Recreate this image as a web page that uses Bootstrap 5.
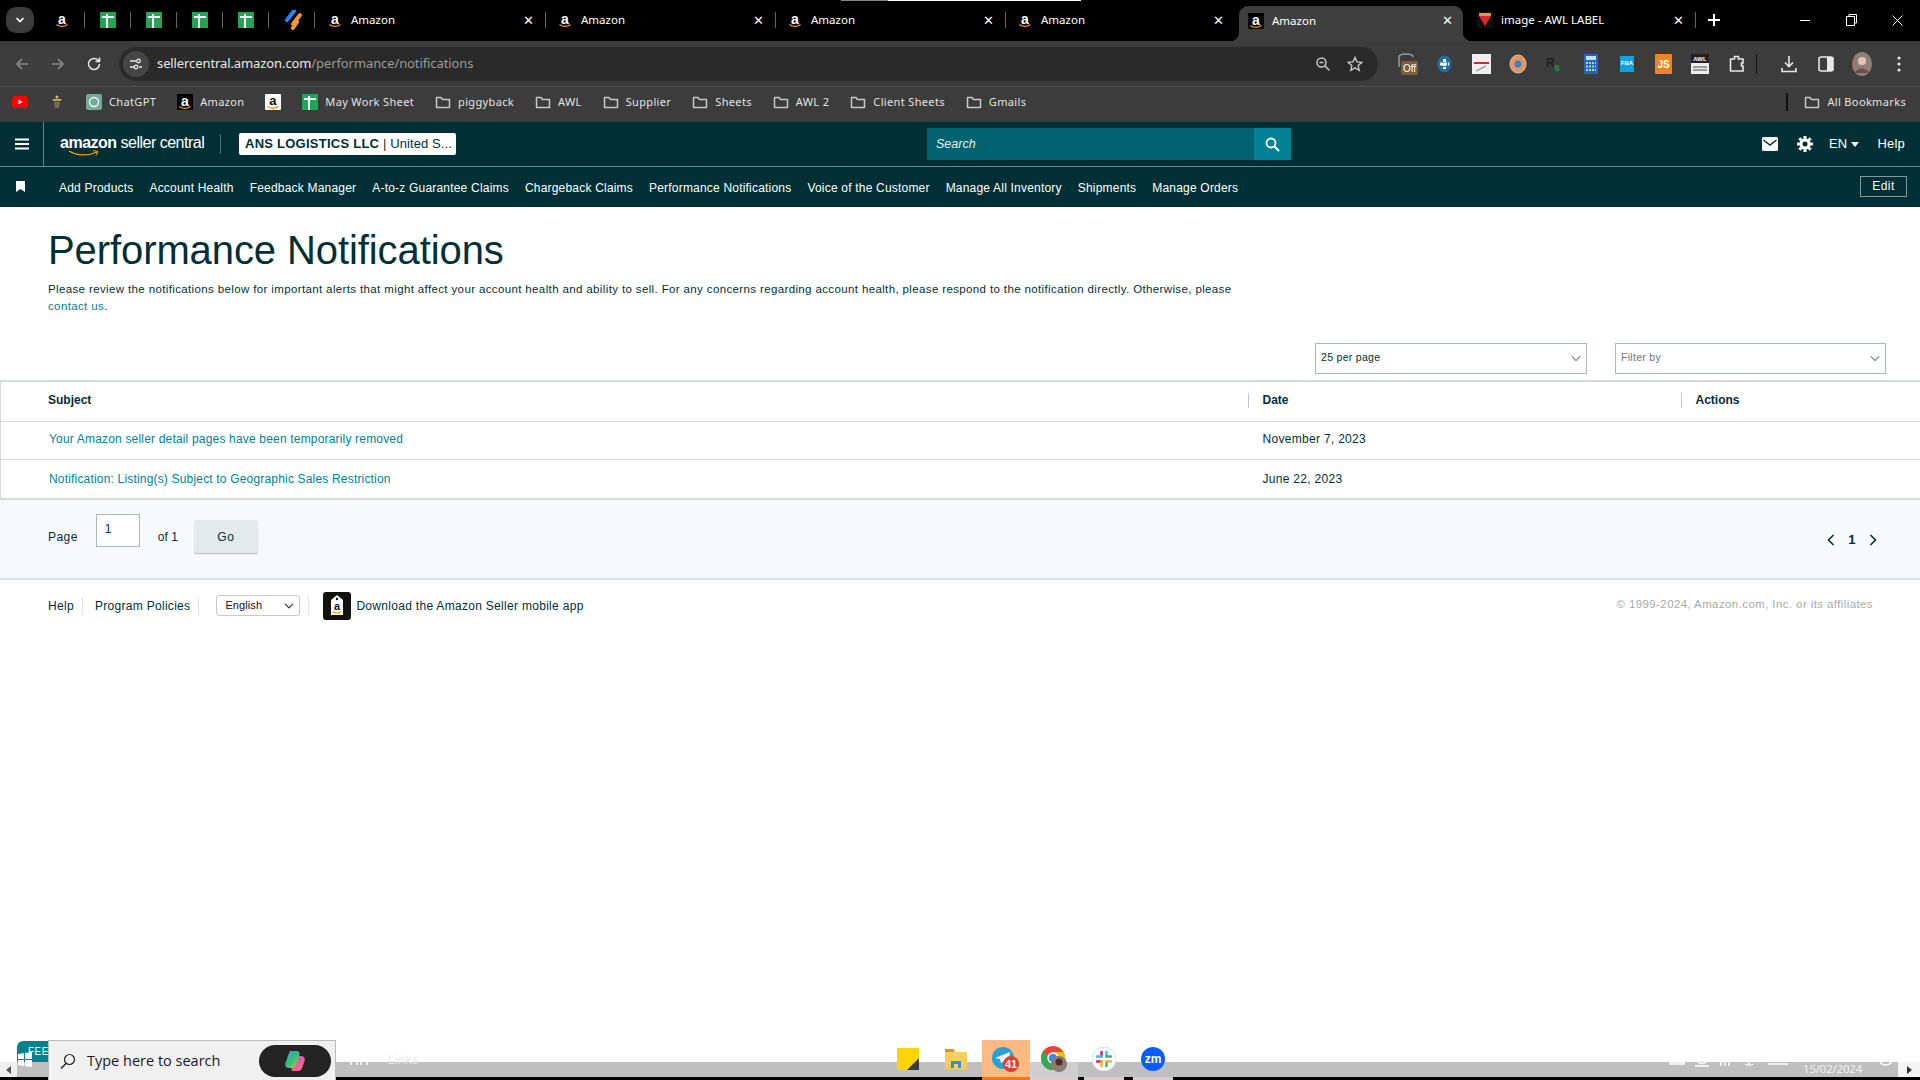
<!DOCTYPE html>
<html lang="en">
<head>
    <meta charset="UTF-8">
    <meta name="viewport" content="width=device-width, initial-scale=1">
    <title>Performance Notifications</title>
    <link href="https://cdn.jsdelivr.net/npm/bootstrap@5.3.0/dist/css/bootstrap.min.css" rel="stylesheet">
    <style>
        html, body { height: 100%; }
        body {
            font-family: "Liberation Sans", Arial, sans-serif;
            font-size: 12px;
            letter-spacing: .45px;
            color: #002f36;
            background: #fff;
            overflow: hidden;
        }
        a { color: #008296; text-decoration: none; }
        .shell { height: 1080px; }

        /* browser chrome */
        .tabstrip { height: 41px; background: #000; color: #fff; font-family: "Noto Sans", sans-serif; letter-spacing: 0; }
        .sliver { height: 1px; width: 240px; margin-left: 841px; background: linear-gradient(90deg, #888 47px, #fff 47px); }
        .tabrow { height: 40px; }
        .tablist-btn { width: 28px; height: 26px; margin: 0 5px 2px 6px; border-radius: 10px; background: #3c3c3c; }
        .pin { width: 46px; height: 38px; position: relative; margin-bottom: 2px; }
        .pin::after, .tabx::after { content: ""; position: absolute; right: 0; top: 11px; height: 16px; border-right: 1px solid #666; }
        .pin.jira { padding-left: 3px; }
        .tabx { width: 230px; height: 38px; margin-bottom: 2px; padding: 0 12px 0 11px; position: relative; font-size: 11.5px; }
        .tabx.first { margin-left: 1px; }
        .tabx .ttl { margin-left: 8px; }
        .tabx.no-sep::after { display: none; }
        .tabx.on { width: 224px; height: 35px; margin: 5px 3px 0 3px; padding: 0 10px 6px 9px; background: #3f3f3f; border-radius: 9px 9px 0 0; }
        .tabx.on::after { content: ""; top: auto; bottom: 0; right: -9px; width: 9px; height: 9px; border: 0; background: radial-gradient(circle at 100% 0, #000 9px, #3f3f3f 9.5px); }
        .tabx.on::before { content: ""; position: absolute; bottom: 0; left: -9px; width: 9px; height: 9px; background: radial-gradient(circle at 0 0, #000 9px, #3f3f3f 9.5px); }
        .tab-close { margin-left: auto; font-size: 13px; line-height: 1; }
        .newtab { margin: 0 0 2px 11px; }
        .wincontrols { margin-left: auto; margin-bottom: 2px; }
        .winbtn { width: 46px; height: 38px; }

        .toolbar { height: 46px; background: #3c3c3c; border-bottom: 1px solid #515151; }
        .navbtn { width: 36px; }
        .omni { width: 1259px; height: 34px; margin-left: 7px; background: #2a2a2a; border-radius: 17px; color: #e8e8e8; font-family: "Noto Sans", sans-serif; font-size: 13px; letter-spacing: -.1px; padding: 0 15px 0 4px; }
        .omni .tune { width: 26px; height: 26px; border-radius: 50%; background: #454545; margin-right: 8px; }
        .omni .path { color: #9a9a9a; }
        .exts { margin-left: 12px; }
        .ext { width: 36.5px; }
        .bar-sep { width: 1px; height: 20px; background: #111; margin: 0 14px 0 1px; }

        .bookmarks { height: 35px; padding: 0 0 5px 12px; background: #3c3c3c; color: #e4e4e4; font-family: "Noto Sans", sans-serif; font-size: 11px; letter-spacing: .35px; gap: 21px; }
        .bm { gap: 7px; white-space: nowrap; }
        .bm.trailing { margin-left: auto; margin-right: 14px; }
        .bm-sep { width: 2px; height: 18px; background: #111; margin-right: 9px; }

        /* seller header */
        .seller-top { height: 45px; background: #002f36; color: #fff; border-bottom: 1px solid #6f8488; }
        .burger { width: 44px; height: 44px; border-right: 1px solid #6f8488; }
        .sc-logo { margin-left: 16px; width: 161px; height: 44px; position: relative; line-height: 1; }
        .sc-logo::after { content: ""; position: absolute; right: 0; top: 12px; height: 20px; border-right: 1px solid #56707a; }
        .logo-line { font-size: 16px; letter-spacing: -.5px; margin-top: -3px; white-space: nowrap; }
        .logo-smile { position: absolute; left: 8px; top: 28px; }
        .acct { margin-left: 18px; width: 217px; height: 22px; padding-left: 6px; background: #fff; color: #002f36; border-radius: 2px; font-size: 13px; letter-spacing: .1px; white-space: nowrap; }
        .acct b { font-size: 13px; letter-spacing: .25px; }
        .searchwrap { width: 364px; height: 32px; margin-left: 471px; }
        .searchfield { flex: 1; border: 0; border-radius: 0; background: #006170; color: #fff; font-size: 12.5px; font-style: italic; padding: 0 9px; }
        .searchfield::placeholder { color: #e6f0f2; opacity: 1; }
        .searchfield:focus { background: #006170; box-shadow: none; }
        .searchbtn { width: 37px; height: 32px; background: #008296; border: 0; border-radius: 0; padding: 0; }
        .top-right { margin-left: auto; padding-right: 15px; gap: 18px; font-size: 13px; letter-spacing: .2px; }
        .top-right .gear { margin: 0 -2px 0 1px; }
        .seller-nav { height: 40px; background: #002f36; color: #fff; padding-left: 16px; padding-right: 13px; }
        .seller-nav .marker { width: 43px; margin-top: -1px; }
        .seller-nav .links { gap: 16px; letter-spacing: .2px; white-space: nowrap; margin-top: 1px; }
        .seller-nav a { color: #fff; }
        .edit-btn { margin-left: auto; margin-top: -2px; width: 47px; height: 21px; padding: 0; border: 1px solid #87989b; border-radius: 0; background: transparent; color: #fff; font-size: 12px; letter-spacing: .5px; line-height: 17px; }

        /* page */
        .page-head { padding: 20px 48px 0 48px; height: 136px; }
        .page-head h1 { font-size: 40px; font-weight: 400; margin: 0; line-height: 46px; letter-spacing: -.09px; color: #002f36; }
        .page-head p { margin: 8px 0 0; width: 1195px; line-height: 17px; font-size: 11.5px; letter-spacing: .37px; }
        .filters { height: 31px; padding-right: 34px; gap: 28px; justify-content: flex-end; margin-bottom: 6px; }
        .pick { height: 31px; border: 1px solid #a9b7b7; border-radius: 0; font-size: 10.5px; letter-spacing: .3px; padding: 0 20px 2px 5px; color: #002f36; background-image: url("data:image/svg+xml,%3csvg xmlns='http://www.w3.org/2000/svg' viewBox='0 0 12 8'%3e%3cpath fill='none' stroke='%23667a7c' stroke-width='1.300' d='M1 1.500l5 5 5-5'/%3e%3c/svg%3e"); background-size: 10px 7px; background-position: right 5px center; }
        .pick.per { width: 272px; }
        .pick.flt { width: 271px; color: #6c7778; }
        .notif-table { table-layout: fixed; width: 100%; margin: 0; border-top: 2px solid #d5dbdb; border-left: 1px solid #d5dbdb; --bs-table-color: #002f36; font-size: 12px; letter-spacing: .18px; }
        .notif-table th, .notif-table td { padding: 0; vertical-align: middle; border-bottom: 1px solid #d5dbdb; }
        .notif-table th { letter-spacing: 0; padding-bottom: 2px; }
        .notif-table thead tr { height: 40px; }
        .notif-table tbody tr { height: 38px; }
        .notif-table tbody tr:first-child td { padding-bottom: 2px; }
        .notif-table tbody tr:last-child { height: 40px; }
        .notif-table tbody tr:last-child td { border-bottom: 2px solid #d5dbdb; padding-top: 1px; }
        .notif-table .c1 { width: 1247px; padding-left: 48px; }
        .notif-table th.c1 { padding-left: 47px; }
        .notif-table .c2 { width: 433px; }
        .notif-table .head-cell { border-left: 1px solid #c0c8c8; padding-left: 14px; height: 15px; line-height: 15px; }
        .notif-table .date-cell { padding-left: 15px; letter-spacing: .3px; }
        .notif-table .c3 { width: 240px; }
        .pager-bar { height: 80px; background: #f8f9fb; border-bottom: 2px solid #dfe3e6; padding: 14px 43px 0 48px; }
        .pager-bar .pg-label { margin-top: 14px; }
        .pager-bar .pg-of { letter-spacing: 0; }
        .pg-input { width: 44px; height: 33px; border: 1px solid #a9b7b7; border-radius: 0; padding: 0 0 3px 8px; margin: 0 18px 0 18px; font-size: 12px; color: #002f36; }
        .pg-go { width: 64px; height: 33px; margin: 6px 0 0 16px; padding: 0; border: 0; border-radius: 2px; background: #e3eaea; color: #002f36; font-size: 12px; letter-spacing: .5px; box-shadow: 0 1px 1px rgba(0,0,0,.25); }
        .pager-arrows { margin-left: auto; margin-top: 18px; gap: 13px; font-weight: 700; font-size: 13px; height: 16px; }
        .foot { height: 48px; padding: 3px 48px 0 48px; letter-spacing: .3px; }
        .foot .sep { width: 1px; height: 18px; background: #dfe3e3; }
        .foot-lang { width: 84px; height: 21px; padding: 0 0 0 8px; margin-left: 9px; border: 1px solid #c5c9c9; border-radius: 3px; font-size: 11px; letter-spacing: .1px; color: #111; background-size: 10px 10px; background-position: right 5px center; }
        .app-tag { margin: 0 5px 0 14px; }
        .copyright { margin-left: auto; margin-top: -1px; margin-right: -1px; color: #aaa; font-size: 11.5px; letter-spacing: .4px; }

        /* windows taskbar */
        .spacer { flex: 1; }
        .taskbar { height: 40px; position: relative; background: linear-gradient(#fff 22px, #bfbfbf 22px, #bfbfbf 37px, #000 37px); }
        .scroll-l { width: 17px; height: 15px; margin-top: 22px; background: #efefef; }
        .scroll-r { width: 22px; height: 15px; margin: 22px 0 0 auto; background: #f4f4f4; }
        .feed { width: 31px; height: 21px; margin-top: 1px; background: #00838f; color: #fff; border-radius: 6px 0 0 0; font-size: 10px; padding: 3px 0 0 11px; overflow: hidden; letter-spacing: .5px; }
        .win-logo { position: absolute; left: 18px; top: 12px; }
        .search-box { width: 288px; height: 40px; background: #f0f0f0; border: 1px solid #bcbcbc; border-bottom: 0; padding: 0 4px 0 11px; font-family: "Open Sans", sans-serif; font-size: 14.5px; letter-spacing: 0; color: #1b1b1b; }
        .search-box span { margin-left: 11px; }
        .copilot { width: 72px; height: 32px; margin-left: auto; border-radius: 16px; background: #232323; }
        .faint-links { margin: 11px 0 0 52px; color: #e7e7e7; font-size: 12px; }
        .apps { margin-left: 466px; height: 40px; }
        .appslot { width: 48px; height: 40px; padding-bottom: 2px; }
        .appslot.hot { margin-left: 2px; background: linear-gradient(#fcb983 37px, #f97316 37px); }
        .appslot.open { background: linear-gradient(transparent 22px, #cfcfcf 22px, #cfcfcf 37px, #d6cdcc 37px); }
        .appslot.run { width: 40px; background: linear-gradient(transparent 37px, #d6cdcc 37px); }
        .appslot.slack { margin-left: 6px; }
        .appslot.zoom { margin-left: 9px; }
        .tray-date { color: #f4f4f4; font-family: "Open Sans", sans-serif; font-size: 11.5px; letter-spacing: -.2px; position: absolute; left: 1803px; top: 20px; }
        .tray-faint { position: absolute; left: 1665px; top: 18px; }
        .faint-ico { position: absolute; left: 350px; top: 20px; }
    </style>
</head>
<body>
<svg width="0" height="0" class="d-none">
    <symbol id="amz" viewBox="0 0 16 16">
        <rect width="16" height="16" fill="#000"/>
        <text x="8" y="11.5" text-anchor="middle" font-family="Liberation Sans" font-weight="700" font-size="14" fill="#fff">a</text>
        <path d="M2.5 12.5c3 2.4 7.500 2.400 11 0" fill="none" stroke="#f90" stroke-width="1.500"/>
    </symbol>
    <symbol id="sheet" viewBox="0 0 16 16">
        <rect width="16" height="16" fill="#23a455"/>
        <path d="M2 5h12M7 2v14" stroke="#fff" stroke-width="2"/>
    </symbol>
    <symbol id="fld" viewBox="0 0 16 16">
        <path d="M1.500 3.500h4.500l1.500 2h7v8h-13z" fill="none" stroke="#c8c8c8" stroke-width="1.500" stroke-linejoin="round"/>
    </symbol>
</svg>

<div class="shell d-flex flex-column">
    <!-- browser window -->
    <div class="tabstrip flex-shrink-0">
        <div class="sliver"></div>
        <div class="tabrow d-flex align-items-center">
            <div class="tablist-btn d-flex align-items-center justify-content-center flex-shrink-0">
                <svg width="10" height="8" viewBox="0 0 10 8"><path d="M1.500 2l3.500 3.500L8.500 2" fill="none" stroke="#fff" stroke-width="1.600"/></svg>
            </div>
            <div class="pin d-flex align-items-center justify-content-center"><svg width="16" height="16"><use href="#amz"/></svg></div>
            <div class="pin d-flex align-items-center justify-content-center"><svg width="16" height="16"><use href="#sheet"/></svg></div>
            <div class="pin d-flex align-items-center justify-content-center"><svg width="16" height="16"><use href="#sheet"/></svg></div>
            <div class="pin d-flex align-items-center justify-content-center"><svg width="16" height="16"><use href="#sheet"/></svg></div>
            <div class="pin d-flex align-items-center justify-content-center"><svg width="16" height="16"><use href="#sheet"/></svg></div>
            <div class="pin jira d-flex align-items-center justify-content-center">
                <svg width="18" height="20" viewBox="0 0 18 20"><path d="M9 1L2 10" stroke="#2684ff" stroke-width="4" stroke-linecap="round"/><path d="M15 5L8 14" stroke="#f79232" stroke-width="4" stroke-linecap="round"/><path d="M12 12l-4 6" stroke="#f0a030" stroke-width="4" stroke-linecap="round"/></svg>
            </div>
            <div class="tabx first d-flex align-items-center"><svg width="16" height="16"><use href="#amz"/></svg><span class="ttl">Amazon</span><span class="tab-close">✕</span></div>
            <div class="tabx d-flex align-items-center"><svg width="16" height="16"><use href="#amz"/></svg><span class="ttl">Amazon</span><span class="tab-close">✕</span></div>
            <div class="tabx d-flex align-items-center"><svg width="16" height="16"><use href="#amz"/></svg><span class="ttl">Amazon</span><span class="tab-close">✕</span></div>
            <div class="tabx no-sep d-flex align-items-center"><svg width="16" height="16"><use href="#amz"/></svg><span class="ttl">Amazon</span><span class="tab-close">✕</span></div>
            <div class="tabx on d-flex align-items-center"><svg width="16" height="16"><use href="#amz"/></svg><span class="ttl">Amazon</span><span class="tab-close">✕</span></div>
            <div class="tabx d-flex align-items-center">
                <svg width="16" height="16" viewBox="0 0 16 16"><rect width="16" height="16" fill="#111"/><path d="M2 4h12L8 14z" fill="#e0252f"/><rect x="2" y="1" width="12" height="3" fill="#c9a04a"/></svg>
                <span class="ttl">image - AWL LABEL</span><span class="tab-close">✕</span>
            </div>
            <svg class="newtab" width="14" height="14" viewBox="0 0 14 14"><path d="M7 1v12M1 7h12" stroke="#fff" stroke-width="2"/></svg>
            <div class="wincontrols d-flex">
                <div class="winbtn d-flex align-items-center justify-content-center"><svg width="10" height="10"><path d="M0 5.500h10" stroke="#fff"/></svg></div>
                <div class="winbtn d-flex align-items-center justify-content-center"><svg width="11" height="12" viewBox="0 0 11 12"><path d="M3 2.500V.500h7.500v8.500H8.500M.500 2.500h8v9h-8z" fill="none" stroke="#fff"/></svg></div>
                <div class="winbtn d-flex align-items-center justify-content-center"><svg width="11" height="11"><path d="M.500.500l10 10M10.500.500l-10 10" stroke="#fff"/></svg></div>
            </div>
        </div>
    </div>

    <div class="toolbar d-flex align-items-center flex-shrink-0">
        <div class="d-flex align-items-center ps-1 flex-shrink-0">
            <div class="navbtn d-flex justify-content-center"><svg width="16" height="16" viewBox="0 0 16 16"><path d="M14 8H3M8 3L3 8l5 5" fill="none" stroke="#8c8c8c" stroke-width="1.600"/></svg></div>
            <div class="navbtn d-flex justify-content-center"><svg width="16" height="16" viewBox="0 0 16 16"><path d="M2 8h11M8 3l5 5-5 5" fill="none" stroke="#8c8c8c" stroke-width="1.600"/></svg></div>
            <div class="navbtn d-flex justify-content-center"><svg width="16" height="16" viewBox="0 0 16 16"><path d="M13.500 8a5.500 5.500 0 1 1-1.600-3.900L13.500 5.500M13.500 1.500v4h-4" fill="none" stroke="#e8e8e8" stroke-width="1.600"/></svg></div>
        </div>
        <div class="omni d-flex align-items-center flex-shrink-0">
            <div class="tune d-flex align-items-center justify-content-center flex-shrink-0">
                <svg width="14" height="14" viewBox="0 0 14 14"><path d="M1 4h6M10 10h3M1 10h4" stroke="#e8e8e8" stroke-width="1.300"/><circle cx="9.500" cy="4" r="1.800" fill="none" stroke="#e8e8e8" stroke-width="1.300"/><circle cx="7" cy="10" r="1.800" fill="none" stroke="#e8e8e8" stroke-width="1.300"/></svg>
            </div>
            <span>sellercentral.amazon.com<span class="path">/performance/notifications</span></span>
            <svg class="ms-auto" width="16" height="16" viewBox="0 0 16 16"><circle cx="6.500" cy="6.500" r="4.500" fill="none" stroke="#c7c7c7" stroke-width="1.500"/><path d="M10 10l4.500 4.500M4.500 6.500h4" stroke="#c7c7c7" stroke-width="1.500"/></svg>
            <svg class="ms-3" width="16" height="16" viewBox="0 0 16 16"><path d="M8 1.500l2 4.400 4.700.5-3.500 3.200 1 4.700L8 11.900l-4.200 2.400 1-4.700L1.300 6.400 6 5.900z" fill="none" stroke="#c7c7c7" stroke-width="1.400"/></svg>
        </div>
        <div class="exts d-flex align-items-center">
            <div class="ext d-flex justify-content-center"><svg width="20" height="24" viewBox="0 0 20 24"><path d="M1 5c0-4 14-4 14 0" fill="none" stroke="#9a9a9a" stroke-width="1.500"/><path d="M1 5v10" stroke="#9a9a9a" stroke-width="1.500"/><rect x="3" y="9" width="17" height="14" rx="2" fill="#7a5e43"/><text x="11.500" y="20" text-anchor="middle" font-family="Liberation Sans" font-size="10" letter-spacing="0" fill="#fff">Off</text></svg></div>
            <div class="ext d-flex justify-content-center"><svg width="15" height="18" viewBox="0 0 15 18"><ellipse cx="7.500" cy="9" rx="7" ry="8.500" fill="#1d6fa5"/><path d="M7.500 4v10M3 9h9" stroke="#fff" stroke-width="3" stroke-dasharray="3 1"/></svg></div>
            <div class="ext d-flex justify-content-center"><svg width="19" height="20" viewBox="0 0 19 20"><rect width="19" height="20" fill="#eee"/><path d="M2 9h15" stroke="#b33" stroke-width="2"/><path d="M4 17l10-5" stroke="#777"/></svg></div>
            <div class="ext d-flex justify-content-center"><svg width="18" height="20" viewBox="0 0 18 20"><ellipse cx="9" cy="10" rx="8" ry="9" fill="#e8935a" stroke="#c9c9c9"/><circle cx="9" cy="10" r="3.500" fill="#3b7fc4"/></svg></div>
            <div class="ext d-flex justify-content-center"><svg width="18" height="18" viewBox="0 0 18 18"><text x="1" y="12" font-family="Liberation Sans" font-weight="700" font-size="12" letter-spacing="0" fill="#222">R</text><text x="9" y="16" font-family="Liberation Sans" font-weight="700" font-size="11" letter-spacing="0" fill="#1c9a50">s</text></svg></div>
            <div class="ext d-flex justify-content-center"><svg width="14" height="20" viewBox="0 0 14 20"><rect width="14" height="20" fill="#2f5fc0"/><rect x="2" y="2" width="10" height="4" fill="#bfe3ff"/><path d="M2 9h10M2 12.500h10M2 16h10" stroke="#9fe0a0" stroke-width="2" stroke-dasharray="2 1"/></svg></div>
            <div class="ext d-flex justify-content-center"><svg width="14" height="16" viewBox="0 0 14 16"><rect width="14" height="16" fill="#14a0d8"/><text x="7" y="9" text-anchor="middle" font-family="Liberation Sans" font-weight="700" font-size="6" letter-spacing="0" fill="#fff">FBA</text></svg></div>
            <div class="ext d-flex justify-content-center"><svg width="17" height="20" viewBox="0 0 17 20"><rect width="17" height="20" rx="1" fill="#f58220"/><text x="8.500" y="14" text-anchor="middle" font-family="Liberation Sans" font-weight="700" font-size="10" letter-spacing="0" fill="#fff">JS</text></svg></div>
            <div class="ext d-flex justify-content-center"><svg width="18" height="20" viewBox="0 0 18 20"><rect width="18" height="20" fill="#eee"/><rect width="18" height="9" fill="#222"/><text x="9" y="7" text-anchor="middle" font-family="Liberation Sans" font-weight="700" font-size="6" letter-spacing="0" fill="#fff">AWL</text><path d="M2 13h14M2 16h14" stroke="#444"/></svg></div>
            <div class="ext d-flex justify-content-center"><svg width="16" height="18" viewBox="0 0 16 18"><path d="M1.500 4h4V1.500h4V4h4.500v4h-1.500v3H14v5H1.500z" fill="none" stroke="#e8e8e8" stroke-width="1.600"/></svg></div>
            <div class="bar-sep"></div>
            <div class="ext d-flex justify-content-center"><svg width="16" height="18" viewBox="0 0 16 18"><path d="M8 1v10M4 7.500l4 4 4-4M1 13v3.500h14V13" fill="none" stroke="#e8e8e8" stroke-width="1.600"/></svg></div>
            <div class="ext d-flex justify-content-center"><svg width="16" height="16" viewBox="0 0 16 16"><rect x="1" y="1" width="14" height="14" rx="2" fill="none" stroke="#e8e8e8" stroke-width="1.600"/><rect x="9" y="1" width="6" height="14" fill="#e8e8e8"/></svg></div>
            <div class="ext d-flex justify-content-center"><svg width="20" height="24" viewBox="0 0 20 24"><ellipse cx="10" cy="12" rx="10" ry="12" fill="#8f7f78"/><circle cx="10" cy="9" r="4" fill="#e4c5b4"/><path d="M3 21c2-6 12-6 14 0" fill="#6e4c46"/></svg></div>
            <div class="ext d-flex justify-content-center"><svg width="4" height="16" viewBox="0 0 4 16"><circle cx="2" cy="2" r="1.600" fill="#e8e8e8"/><circle cx="2" cy="8" r="1.600" fill="#e8e8e8"/><circle cx="2" cy="14" r="1.600" fill="#e8e8e8"/></svg></div>
        </div>
    </div>

    <div class="bookmarks d-flex align-items-center flex-shrink-0">
        <div class="bm d-flex align-items-center"><svg width="16" height="12" viewBox="0 0 16 12"><rect width="16" height="12" rx="3" fill="#f00"/><path d="M6.500 3.500v5l4-2.500z" fill="#fff"/></svg></div>
        <div class="bm d-flex align-items-center"><svg width="16" height="16" viewBox="0 0 16 16"><path d="M3 5h10l-1.500 2h-7z" fill="#c7a25a"/><path d="M5 8h6l-1 6H6z" fill="#7b6b58"/><circle cx="8" cy="3" r="1.500" fill="#d9b66a"/></svg></div>
        <div class="bm d-flex align-items-center"><svg width="16" height="16" viewBox="0 0 16 16"><rect width="16" height="16" rx="2" fill="#74aa9c"/><circle cx="8" cy="8" r="4.500" fill="none" stroke="#fff" stroke-width="1.300"/></svg>ChatGPT</div>
        <div class="bm d-flex align-items-center"><svg width="16" height="16"><use href="#amz"/></svg>Amazon</div>
        <div class="bm d-flex align-items-center">
            <svg width="16" height="16" viewBox="0 0 16 16"><rect width="16" height="16" rx="1" fill="#fff"/><text x="8" y="11" text-anchor="middle" font-family="Liberation Sans" font-weight="700" font-size="13" fill="#111">a</text><path d="M2.500 12.500c3 2 7.500 2 11 0" fill="none" stroke="#f90" stroke-width="1.500"/></svg>
        </div>
        <div class="bm d-flex align-items-center"><svg width="16" height="16"><use href="#sheet"/></svg>May Work Sheet</div>
        <div class="bm d-flex align-items-center"><svg width="16" height="16"><use href="#fld"/></svg>piggyback</div>
        <div class="bm d-flex align-items-center"><svg width="16" height="16"><use href="#fld"/></svg>AWL</div>
        <div class="bm d-flex align-items-center"><svg width="16" height="16"><use href="#fld"/></svg>Supplier</div>
        <div class="bm d-flex align-items-center"><svg width="16" height="16"><use href="#fld"/></svg>Sheets</div>
        <div class="bm d-flex align-items-center"><svg width="16" height="16"><use href="#fld"/></svg>AWL 2</div>
        <div class="bm d-flex align-items-center"><svg width="16" height="16"><use href="#fld"/></svg>Client Sheets</div>
        <div class="bm d-flex align-items-center"><svg width="16" height="16"><use href="#fld"/></svg>Gmails</div>
        <div class="bm trailing d-flex align-items-center"><div class="bm-sep"></div><svg width="16" height="16"><use href="#fld"/></svg>All Bookmarks</div>
    </div>

    <!-- seller central header -->
    <div class="seller-top d-flex align-items-center flex-shrink-0">
        <div class="burger d-flex align-items-center justify-content-center">
            <svg width="14" height="12" viewBox="0 0 14 12"><path d="M0 1.500h14M0 6h14M0 10.500h14" stroke="#fff" stroke-width="1.800"/></svg>
        </div>
        <div class="sc-logo d-flex align-items-center">
            <div class="logo-line"><b>amazon</b> seller central</div>
            <svg class="logo-smile" width="32" height="7" viewBox="0 0 32 7"><path d="M1 1c8 5 20 5 28 1" fill="none" stroke="#f90" stroke-width="1.300"/><path d="M25 .500l5 1-2 4" fill="none" stroke="#f90" stroke-width="1"/></svg>
        </div>
        <div class="acct d-flex align-items-center"><b>ANS LOGISTICS LLC</b>&nbsp;| United S...</div>
        <div class="searchwrap d-flex">
            <input class="searchfield form-control" type="text" placeholder="Search">
            <button class="searchbtn btn d-flex align-items-center justify-content-center" type="button" aria-label="Search">
                <svg width="15" height="15" viewBox="0 0 15 15"><circle cx="6" cy="6" r="4.500" fill="none" stroke="#fff" stroke-width="1.800"/><path d="M9.500 9.500l4.500 4.500" stroke="#fff" stroke-width="2"/></svg>
            </button>
        </div>
        <div class="top-right d-flex align-items-center">
            <svg width="16" height="14" viewBox="0 0 16 14"><rect width="16" height="14" rx="1.500" fill="#fff"/><path d="M1.500 3l6.500 5 6.500-5" fill="none" stroke="#002f36" stroke-width="1.500"/></svg>
            <svg class="gear" width="16" height="16" viewBox="0 0 16 16"><circle cx="8" cy="8" r="5.500" fill="#fff"/><path d="M8 0v16M0 8h16M2.300 2.300l11.400 11.400M13.700 2.300L2.300 13.700" stroke="#fff" stroke-width="3"/><circle cx="8" cy="8" r="2.500" fill="#002f36"/></svg>
            <div class="d-flex align-items-center gap-1">EN<svg width="8" height="5" viewBox="0 0 8 5"><path d="M0 0h8L4 5z" fill="#fff"/></svg></div>
            <span>Help</span>
        </div>
    </div>
    <div class="seller-nav d-flex align-items-center flex-shrink-0">
        <div class="marker">
            <svg width="9" height="11" viewBox="0 0 9 11" class="d-block"><path d="M0 0h9v11L4.500 8 0 11z" fill="#fff"/></svg>
        </div>
        <div class="links d-flex">
            <a href="#">Add Products</a>
            <a href="#">Account Health</a>
            <a href="#">Feedback Manager</a>
            <a href="#">A-to-z Guarantee Claims</a>
            <a href="#">Chargeback Claims</a>
            <a href="#">Performance Notifications</a>
            <a href="#">Voice of the Customer</a>
            <a href="#">Manage All Inventory</a>
            <a href="#">Shipments</a>
            <a href="#">Manage Orders</a>
        </div>
        <button class="edit-btn btn" type="button">Edit</button>
    </div>

    <!-- page body -->
    <div class="page-head flex-shrink-0">
        <h1>Performance Notifications</h1>
        <p>Please review the notifications below for important alerts that might affect your account health and ability to sell. For any concerns regarding account health, please respond to the notification directly. Otherwise, please <a href="#">contact us</a>.</p>
    </div>
    <div class="filters d-flex flex-shrink-0">
        <select class="pick per form-select"><option>25 per page</option></select>
        <select class="pick flt form-select"><option>Filter by</option></select>
    </div>
    <table class="notif-table table flex-shrink-0">
        <thead>
        <tr>
            <th class="c1">Subject</th>
            <th class="c2"><div class="head-cell">Date</div></th>
            <th class="c3"><div class="head-cell">Actions</div></th>
        </tr>
        </thead>
        <tbody>
        <tr>
            <td class="c1"><a href="#">Your Amazon seller detail pages have been temporarily removed</a></td>
            <td class="c2 date-cell">November 7, 2023</td>
            <td class="c3"></td>
        </tr>
        <tr>
            <td class="c1"><a href="#">Notification: Listing(s) Subject to Geographic Sales Restriction</a></td>
            <td class="c2 date-cell">June 22, 2023</td>
            <td class="c3"></td>
        </tr>
        </tbody>
    </table>
    <div class="pager-bar d-flex align-items-start flex-shrink-0">
        <span class="pg-label">Page</span>
        <input class="pg-input form-control" type="text" value="1">
        <span class="pg-label pg-of">of 1</span>
        <button class="pg-go btn" type="button">Go</button>
        <div class="pager-arrows d-flex align-items-center">
            <svg width="8" height="12" viewBox="0 0 8 12"><path d="M6.500 1L1.500 6l5 5" fill="none" stroke="#002f36" stroke-width="1.600"/></svg>
            <span>1</span>
            <svg width="8" height="12" viewBox="0 0 8 12"><path d="M1.500 1l5 5-5 5" fill="none" stroke="#002f36" stroke-width="1.600"/></svg>
        </div>
    </div>
    <div class="foot d-flex align-items-center flex-shrink-0">
        <span>Help</span>
        <div class="sep mx-2"></div>
        <span class="ms-1">Program Policies</span>
        <div class="sep mx-2"></div>
        <select class="foot-lang form-select"><option>English</option></select>
        <div class="sep ms-2"></div>
        <svg class="app-tag" width="28" height="28" viewBox="0 0 28 28">
            <rect width="28" height="28" rx="3" fill="#111"/>
            <path d="M14 3l6 5v15H8V8z" fill="#fff"/>
            <circle cx="14" cy="7" r="1.200" fill="#111"/>
            <text x="14" y="18" text-anchor="middle" font-family="Liberation Sans" font-weight="700" font-size="11" letter-spacing="0" fill="#111">a</text>
            <path d="M9.500 19.500c3 2 6 2 9 0" fill="none" stroke="#f90" stroke-width="1.200"/>
        </svg>
        <span>Download the Amazon Seller mobile app</span>
        <span class="copyright">© 1999-2024, Amazon.com, Inc. or its affiliates</span>
    </div>

    <div class="spacer"></div>

    <!-- windows taskbar -->
    <div class="taskbar d-flex flex-shrink-0">
        <div class="scroll-l d-flex align-items-center justify-content-center flex-shrink-0"><svg width="5" height="8" viewBox="0 0 5 8"><path d="M5 0v8L0 4z" fill="#555"/></svg></div>
        <div class="feed flex-shrink-0">FEE</div>
        <svg class="win-logo" width="14" height="15" viewBox="0 0 14 15"><path d="M0 2l6-1v6H0zM7 1l7-1v7H7zM0 8h6v6l-6-1zM7 8h7v7l-7-1z" fill="#fff"/></svg>
        <div class="search-box d-flex align-items-center flex-shrink-0">
            <svg width="16" height="16" viewBox="0 0 16 16"><circle cx="9.500" cy="6.500" r="5" fill="none" stroke="#222" stroke-width="1.200"/><path d="M6 10.500L1 15.500" stroke="#222" stroke-width="1.400"/></svg>
            <span>Type here to search</span>
            <div class="copilot d-flex align-items-center justify-content-center">
                <svg width="22" height="22" viewBox="0 0 22 22">
                    <defs>
                        <linearGradient id="cpA" x1="0" y1="0" x2="1" y2="1"><stop offset="0" stop-color="#2f9be8"/><stop offset=".55" stop-color="#36c26a"/><stop offset="1" stop-color="#f6c32c"/></linearGradient>
                        <linearGradient id="cpB" x1="0" y1="0" x2="1" y2="1"><stop offset="0" stop-color="#8a5cf0"/><stop offset=".6" stop-color="#f0609a"/><stop offset="1" stop-color="#f7893b"/></linearGradient>
                    </defs>
                    <path d="M12 6h5c3 0 4.500 2.500 3.500 5l-2.500 7c-.7 2-2 3-4 3H9c-2 0-2-2-1-4l3-9c.2-1 .5-2 1-2z" fill="url(#cpB)"/>
                    <path d="M7 1h6c2 0 3 1.500 2.500 3.500L12 15c-.5 2-2 3-4 3H5c-3 0-4.500-2.500-3.500-5L5 3C5.500 1.500 6 1 7 1z" fill="url(#cpA)"/>
                </svg>
            </div>
        </div>
        <svg class="faint-ico" width="18" height="5" viewBox="0 0 18 5"><path d="M1 5V1h6v4M11 5V1h6v4" fill="none" stroke="#fff" stroke-width="1.500"/></svg>
        <div class="faint-links flex-shrink-0">Links</div>
        <div class="apps d-flex flex-shrink-0">
            <div class="appslot d-flex align-items-center justify-content-center">
                <svg width="22" height="22" viewBox="0 0 22 22"><rect width="22" height="22" fill="#ffd400"/><path d="M22 10v12H10z" fill="#3a3a3a"/></svg>
            </div>
            <div class="appslot d-flex align-items-center justify-content-center">
                <svg width="22" height="20" viewBox="0 0 22 20"><path d="M0 0h9l2 3h11v17H0z" fill="#f8cf5f"/><rect width="9" height="3" fill="#d99a1e"/><path d="M6 19v-7h10v7h-3v-4H9v4z" fill="#2f8fd8"/></svg>
            </div>
            <div class="appslot hot d-flex align-items-center justify-content-center">
                <svg width="30" height="26" viewBox="0 0 30 26">
                    <circle cx="12" cy="12" r="11" fill="#2a9ed6"/>
                    <path d="M4 12l15-6-2 12-4-3-3 2-1-4z" fill="#fff"/>
                    <circle cx="20" cy="18" r="8" fill="#e53935"/>
                    <text x="20" y="22" text-anchor="middle" font-family="Liberation Sans" font-weight="700" font-size="11" letter-spacing="0" fill="#fff">41</text>
                </svg>
            </div>
            <div class="appslot open d-flex align-items-center justify-content-center">
                <svg width="27" height="27" viewBox="0 0 27 27">
                    <circle cx="12" cy="12" r="12" fill="#ea4335"/>
                    <path d="M12 12L1.600 6A12 12 0 0 0 12 24z" fill="#34a853"/>
                    <path d="M12 24A12 12 0 0 0 22.400 6H12z" fill="#fbbc05"/>
                    <circle cx="12" cy="12" r="5" fill="#4285f4" stroke="#fff" stroke-width="1.500"/>
                    <circle cx="18" cy="18" r="8" fill="#8c7b74"/>
                    <circle cx="18" cy="16" r="3.500" fill="#4a3028"/>
                </svg>
            </div>
            <div class="appslot run slack d-flex align-items-center justify-content-center">
                <svg width="24" height="24" viewBox="0 0 24 24">
                    <circle cx="12" cy="12" r="12" fill="#fff" stroke="#ddd"/>
                    <path d="M9.500 5v4.500M5 14.500h4.500" stroke="#e01e5a" stroke-width="2.500" stroke-linecap="round"/>
                    <path d="M14.500 5v4.500M5 9.500h4.500" stroke="#36c5f0" stroke-width="2.500" stroke-linecap="round"/>
                    <path d="M19 9.500h-4.500M14.500 19v-4.500" stroke="#2eb67d" stroke-width="2.500" stroke-linecap="round"/>
                    <path d="M14.500 14.500H19M9.500 14.500V19" stroke="#ecb22e" stroke-width="2.500" stroke-linecap="round"/>
                </svg>
            </div>
            <div class="appslot run zoom d-flex align-items-center justify-content-center">
                <svg width="24" height="24" viewBox="0 0 24 24"><circle cx="12" cy="12" r="12" fill="#0b5cff"/><text x="12" y="16" text-anchor="middle" font-family="Liberation Sans" font-weight="700" font-size="12" letter-spacing="0" fill="#fff">zm</text></svg>
            </div>
        </div>
        <svg class="tray-faint" width="230" height="10" viewBox="0 0 230 10">
            <path d="M5 4h14v2H5zM32 1c0 6 10 6 10 0M30 8h14M56 8V3M60 8V3M64 8V3M80 6c3 2 5 2 8 0M84 1v5M103 6h20M215 4c3 4 8 4 12 0" fill="none" stroke="#fff" stroke-width="1.400"/>
        </svg>
        <span class="tray-date">15/02/2024</span>
        <div class="scroll-r d-flex align-items-center justify-content-center flex-shrink-0"><svg width="5" height="8" viewBox="0 0 5 8"><path d="M0 0v8l5-4z" fill="#333"/></svg></div>
    </div>
</div>
<script src="https://cdn.jsdelivr.net/npm/bootstrap@5.3.0/dist/js/bootstrap.bundle.min.js"></script>
</body>
</html>
